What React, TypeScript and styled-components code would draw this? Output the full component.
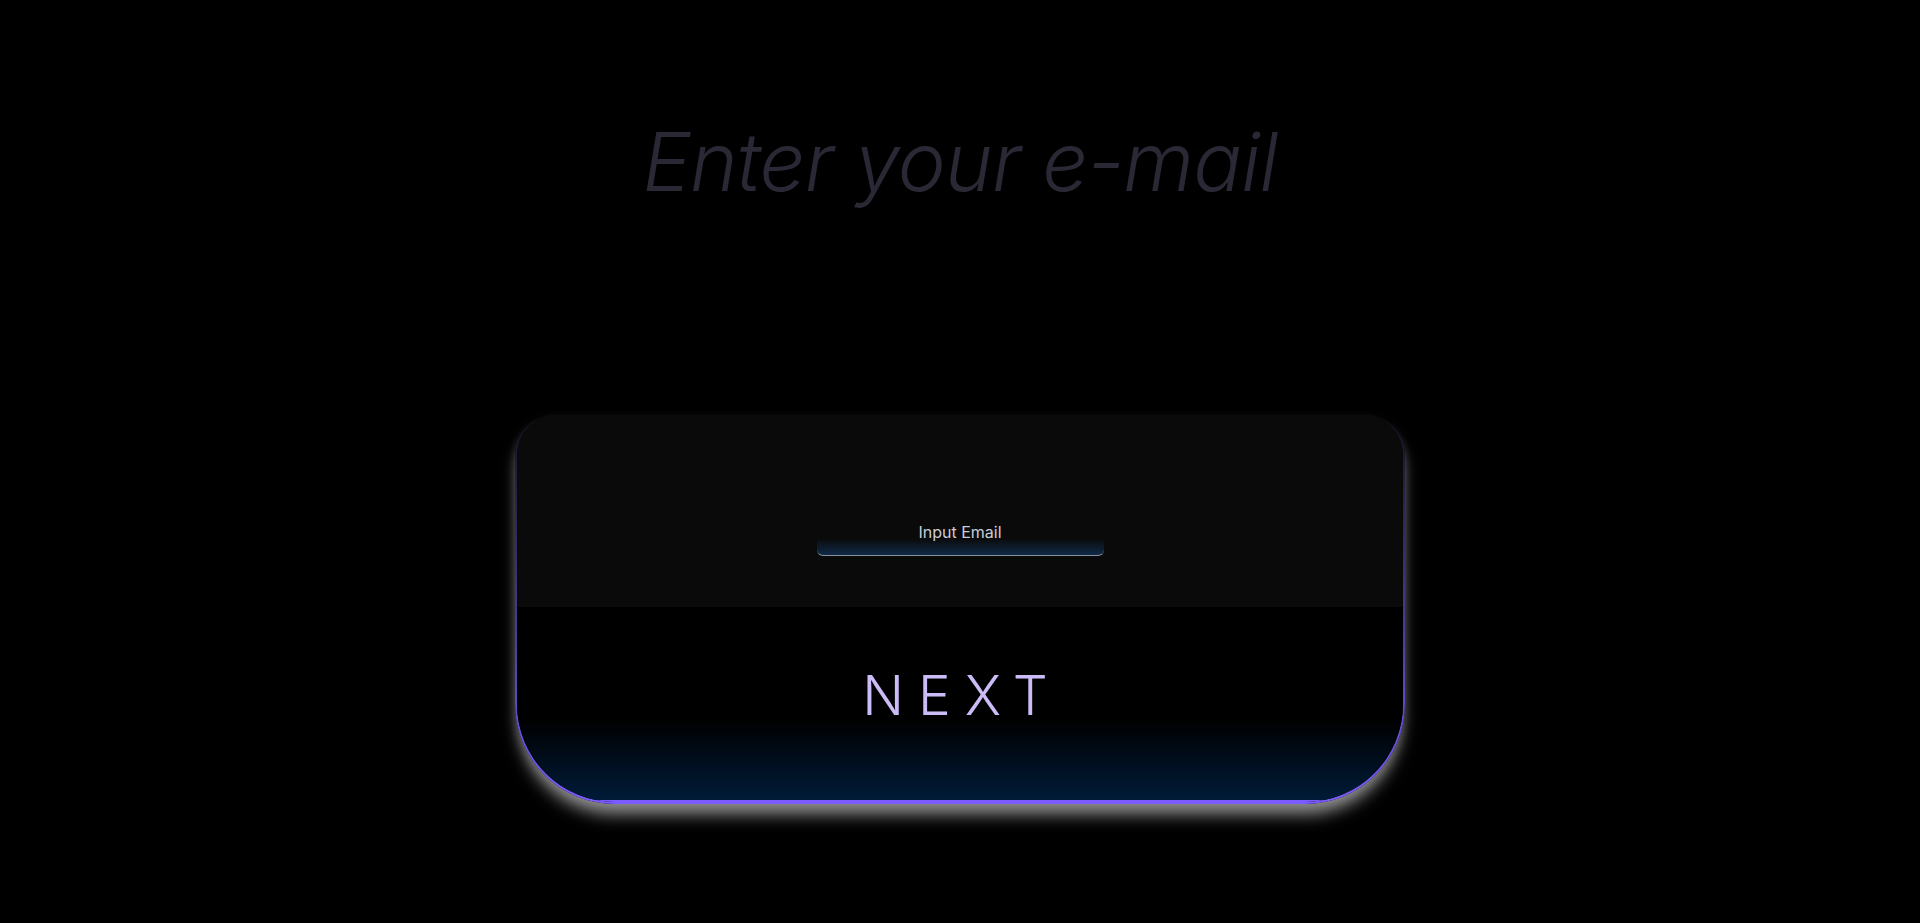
import * as React from "react";
import styled, { createGlobalStyle } from "styled-components";

const GlobalStyle = createGlobalStyle`
  html, body {
    margin: 0;
    padding: 0;
    background: #000;
    height: 100%;
  }
  body {
    font-family: Inter, "Noto Sans", sans-serif;
  }
`;

const Page = styled.div`
  display: flex;
  flex-direction: column;
  align-items: center;
  min-height: 923px;
  background: #000;
`;

const Heading = styled.h1`
  margin: 122px 0 0;
  font-size: 81px;
  line-height: 1;
  font-weight: 300;
  font-style: italic;
  letter-spacing: -0.8px;
  color: #2a2834;
`;

const Card = styled.div`
  display: flex;
  flex-direction: column;
  width: 886px;
  margin-top: 212px;
  border: 2px solid transparent;
  border-top: 0;
  border-radius: 40px 40px 100px 100px;
  background: linear-gradient(#0a0a0a, #0a0a0a) padding-box,
    linear-gradient(to bottom, #15131f 0%, #4a3a99 55%, #7c5cff 100%) border-box;
  box-shadow: 0 14px 16px -3px rgba(255, 255, 255, 0.5),
    0 4px 10px rgba(255, 255, 255, 0.12);
  overflow: hidden;
`;

const Top = styled.div`
  display: flex;
  justify-content: center;
  align-items: flex-end;
  height: 192px;
  padding-bottom: 51px;
  box-sizing: border-box;
  background: #0a0a0a;
`;

const Field = styled.div`
  position: relative;
  width: 287px;
`;

const Label = styled.span`
  position: absolute;
  top: -9px;
  left: 0;
  right: 0;
  text-align: center;
  font-size: 16px;
  color: #c9cdd8;
  pointer-events: none;
`;

const Input = styled.input`
  display: block;
  width: 100%;
  height: 25px;
  box-sizing: border-box;
  border: 0;
  border-bottom: 1px solid #8a8f99;
  border-radius: 0 0 6px 6px;
  background: linear-gradient(to bottom, #0a0a0a 30%, #0f2a48 100%);
  outline: none;
  color: #c9cdd8;
`;

const Bottom = styled.button`
  display: flex;
  justify-content: center;
  align-items: flex-start;
  height: 195px;
  padding: 55px 0 0 4px;
  box-sizing: border-box;
  border: 0;
  border-bottom: 2px solid #7c5cff;
  background: linear-gradient(to bottom, #000 0%, #000 58%, #001b38 100%);
  font-family: Inter, "Noto Sans", sans-serif;
  font-size: 55px;
  font-weight: 300;
  letter-spacing: 14px;
  color: #cbbcf7;
  cursor: pointer;
`;

export default function App() {
  return (
    <Page>
      <GlobalStyle />
      <Heading>Enter your e-mail</Heading>
      <Card>
        <Top>
          <Field>
            <Label>Input Email</Label>
            <Input type="email" aria-label="Input Email" />
          </Field>
        </Top>
        <Bottom>NEXT</Bottom>
      </Card>
    </Page>
  );
}
